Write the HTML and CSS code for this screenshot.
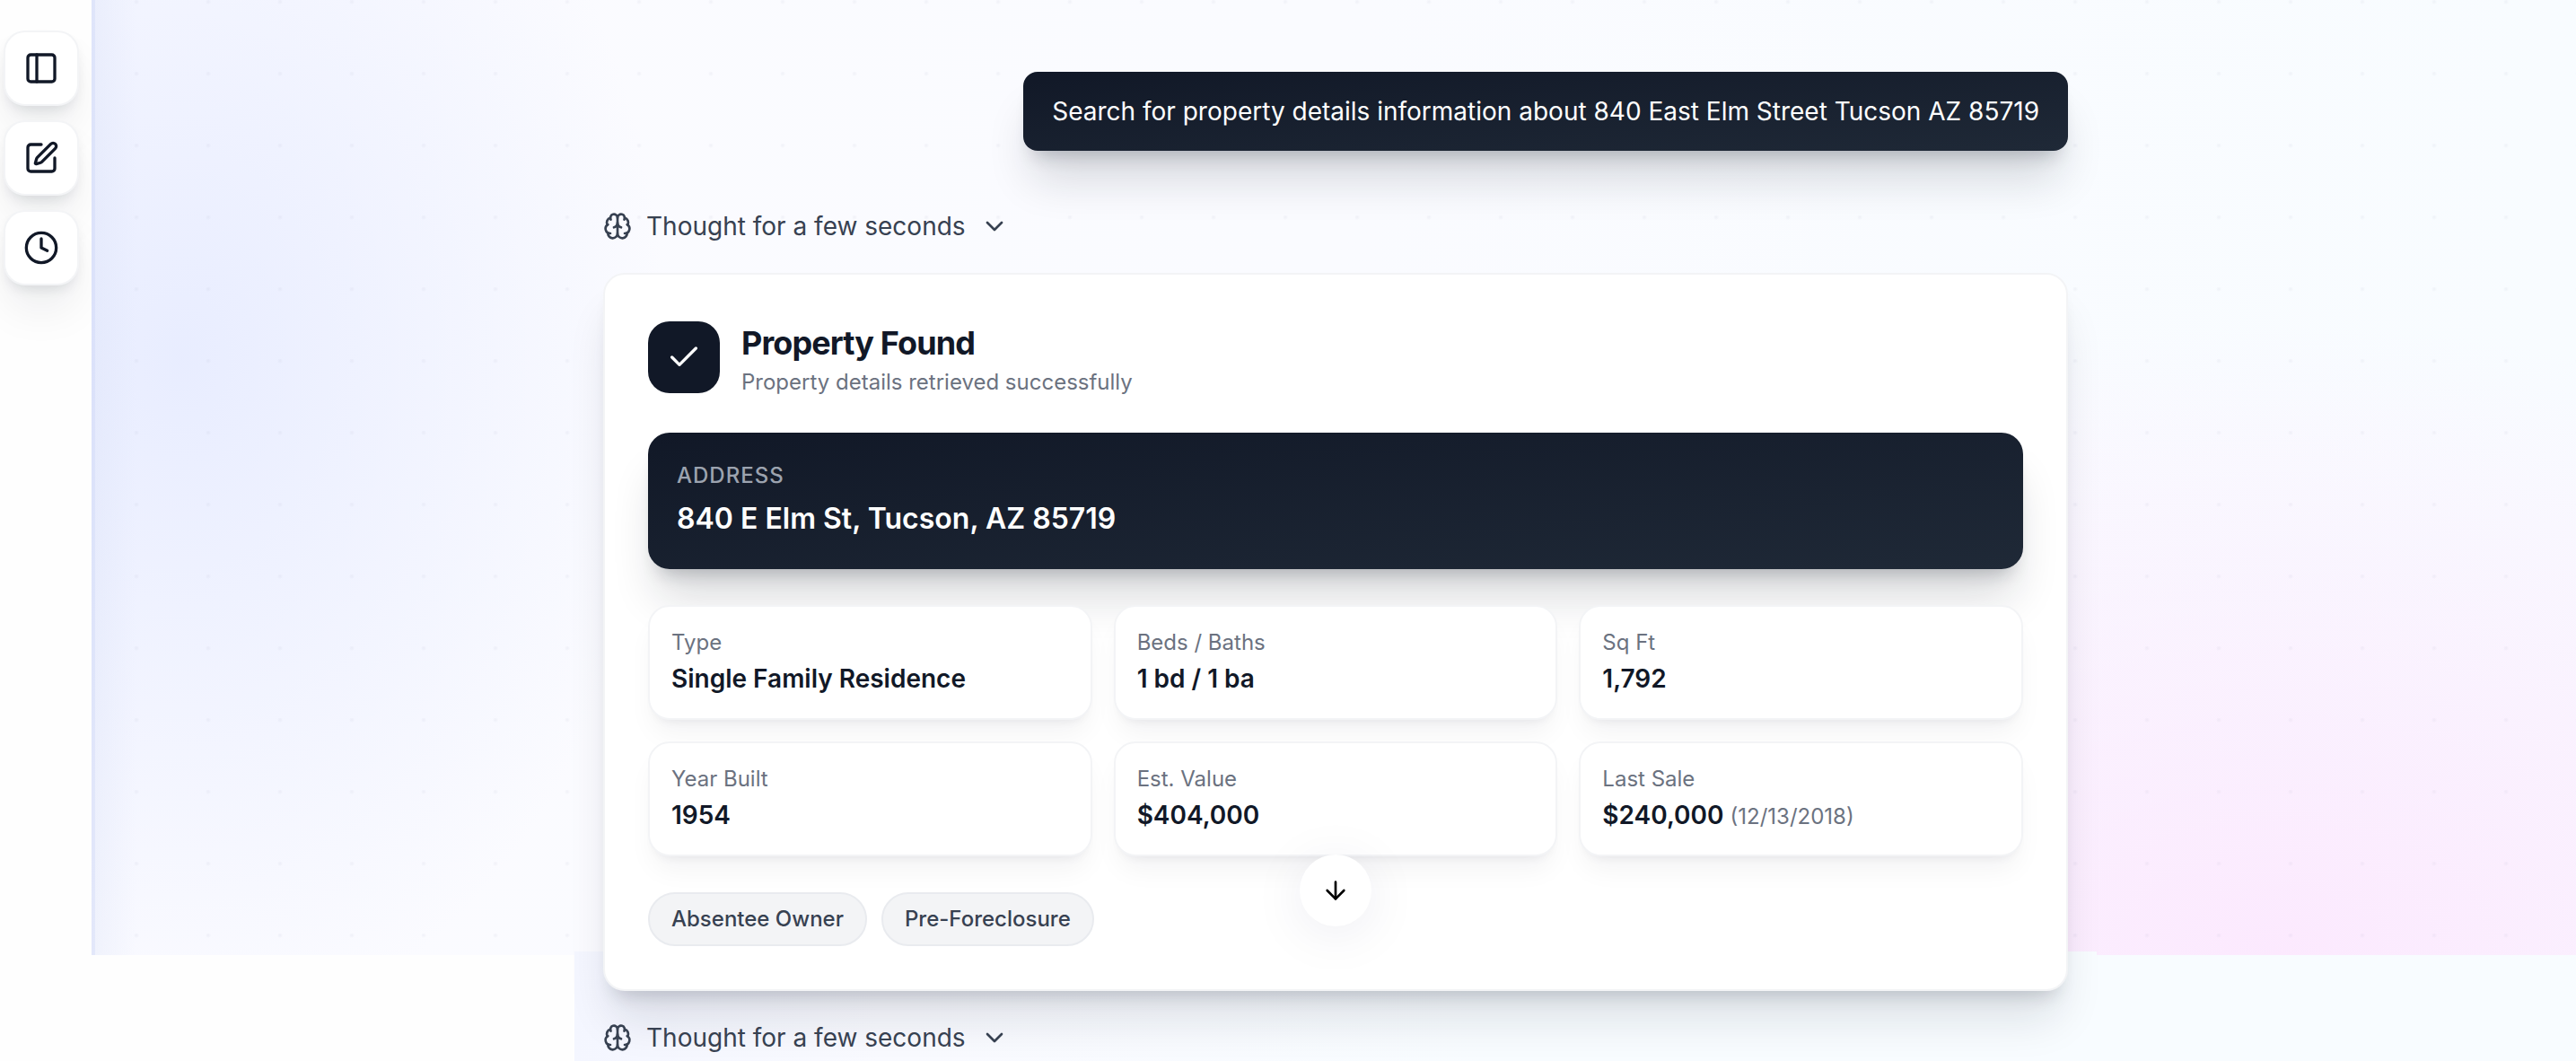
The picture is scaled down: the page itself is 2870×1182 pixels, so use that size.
FILE: index.html
```html
<!DOCTYPE html>
<html lang="en">
<head>
    <meta charset="UTF-8">
    <meta name="viewport" content="width=device-width, initial-scale=1.0">
    <title>Property Assistant</title>
    <link rel="stylesheet" href="styles.css">
</head>
<body>
    <svg class="sprite" aria-hidden="true">
        <symbol id="icon-brain" viewBox="0 0 24 24">
            <path d="M12 18V5"/>
            <path d="M15 13a4.17 4.17 0 0 1-3-4 4.17 4.17 0 0 1-3 4"/>
            <path d="M17.598 6.5A3 3 0 1 0 12 5a3 3 0 1 0-5.598 1.5"/>
            <path d="M17.997 5.125a4 4 0 0 1 2.526 5.77"/>
            <path d="M18 18a4 4 0 0 0 2-7.464"/>
            <path d="M19.967 17.483A4 4 0 1 1 12 18a4 4 0 1 1-7.967-.517"/>
            <path d="M6 18a4 4 0 0 1-2-7.464"/>
            <path d="M6.003 5.125a4 4 0 0 0-2.526 5.77"/>
        </symbol>
        <symbol id="icon-chevron" viewBox="0 0 24 24">
            <path d="m6 9 6 6 6-6"/>
        </symbol>
    </svg>

    <div class="app">
        <nav class="sidebar">
            <button class="nav-button" type="button" aria-label="Toggle sidebar">
                <svg class="icon" viewBox="0 0 24 24">
                    <rect x="3" y="3" width="18" height="18" rx="2"/>
                    <path d="M9 3v18"/>
                </svg>
            </button>
            <button class="nav-button" type="button" aria-label="New chat">
                <svg class="icon" viewBox="0 0 24 24">
                    <path d="M12 3H5a2 2 0 0 0-2 2v14a2 2 0 0 0 2 2h14a2 2 0 0 0 2-2v-7"/>
                    <path d="M18.375 2.625a1 1 0 0 1 3 3l-9.013 9.014a2 2 0 0 1-.853.505l-2.873.84a.5.5 0 0 1-.62-.62l.84-2.873a2 2 0 0 1 .506-.852z"/>
                </svg>
            </button>
            <button class="nav-button" type="button" aria-label="History">
                <svg class="icon" viewBox="0 0 24 24">
                    <circle cx="12" cy="12" r="10"/>
                    <path d="M12 6v6l4 2"/>
                </svg>
            </button>
        </nav>

        <main class="chat">
            <div class="backdrop"></div>
            <div class="thread">
                <div class="user-message">Search for property details information about 840 East Elm Street Tucson AZ 85719</div>

                <button class="thought" type="button">
                    <svg class="icon thought-icon"><use href="#icon-brain"/></svg>
                    <span>Thought for a few seconds</span>
                    <svg class="icon thought-chevron"><use href="#icon-chevron"/></svg>
                </button>

                <section class="card">
                    <header class="card-header">
                        <div class="card-badge">
                            <svg class="icon" viewBox="0 0 24 24"><path d="M20 6 9 17l-5-5"/></svg>
                        </div>
                        <div>
                            <h2 class="card-title">Property Found</h2>
                            <p class="card-subtitle">Property details retrieved successfully</p>
                        </div>
                    </header>

                    <div class="address">
                        <div class="address-label">Address</div>
                        <div class="address-value">840 E Elm St, Tucson, AZ 85719</div>
                    </div>

                    <dl class="facts">
                        <div class="fact">
                            <dt>Type</dt>
                            <dd>Single Family Residence</dd>
                        </div>
                        <div class="fact">
                            <dt>Beds / Baths</dt>
                            <dd>1 bd / 1 ba</dd>
                        </div>
                        <div class="fact">
                            <dt>Sq Ft</dt>
                            <dd>1,792</dd>
                        </div>
                        <div class="fact">
                            <dt>Year Built</dt>
                            <dd>1954</dd>
                        </div>
                        <div class="fact">
                            <dt>Est. Value</dt>
                            <dd>$404,000</dd>
                        </div>
                        <div class="fact">
                            <dt>Last Sale</dt>
                            <dd>$240,000 <span class="fact-note">(12/13/2018)</span></dd>
                        </div>
                    </dl>

                    <div class="tags">
                        <span class="tag">Absentee Owner</span>
                        <span class="tag">Pre-Foreclosure</span>
                    </div>
                </section>

                <button class="thought" type="button">
                    <svg class="icon thought-icon"><use href="#icon-brain"/></svg>
                    <span>Thought for a few seconds</span>
                    <svg class="icon thought-chevron"><use href="#icon-chevron"/></svg>
                </button>
            </div>

            <button class="scroll-button" type="button" aria-label="Scroll to bottom">
                <svg class="icon" viewBox="0 0 24 24"><path d="M12 5v14"/><path d="m19 12-7 7-7-7"/></svg>
            </button>
        </main>
    </div>
</body>
</html>
```
FILE: styles.css
```css
* {
    box-sizing: border-box;
}

body {
    margin: 0;
    font-family: Inter, "Liberation Sans", sans-serif;
    font-size: 28px;
    line-height: 40px;
    color: #111827;
    background: #fefefe;
}

button {
    font: inherit;
    cursor: pointer;
}

h2, p, dl, dd {
    margin: 0;
}

.sprite {
    display: none;
}

.icon {
    fill: none;
    stroke: currentColor;
    stroke-width: 2;
    stroke-linecap: round;
    stroke-linejoin: round;
    flex-shrink: 0;
}

.app {
    display: flex;
    height: 100vh;
    overflow: hidden;
}

/* Sidebar */
.sidebar {
    width: 102px;
    flex-shrink: 0;
    display: flex;
    flex-direction: column;
    gap: 16px;
    padding: 34px 14px 34px 4px;
}

.nav-button {
    width: 84px;
    height: 84px;
    display: flex;
    align-items: center;
    justify-content: center;
    padding: 0;
    color: #111827;
    background: #ffffff;
    border: 2px solid #f3f4f6;
    border-radius: 24px;
    box-shadow: 0 30px 50px -6px rgba(17, 24, 39, 0.08), 0 8px 16px -6px rgba(17, 24, 39, 0.14);
}

.nav-button .icon {
    width: 40px;
    height: 40px;
}

/* Chat area */
.chat {
    position: relative;
    flex-grow: 1;
    display: flex;
    justify-content: center;
    padding-left: 4px;
    background: linear-gradient(to right, #fefefe 50%, #f8fcff 50%);
}

.backdrop {
    position: absolute;
    top: 0;
    left: 0;
    right: 0;
    bottom: 118px;
    border-left: 4px solid rgba(199, 210, 246, 0.3);
    background:
        radial-gradient(circle at 50px 2px, rgba(99, 102, 141, 0.05) 1px, transparent 3px) 0 0 / 80px 80px,
        linear-gradient(to right, rgba(199, 210, 240, 0.2), transparent 50px),
        radial-gradient(ellipse 540px 760px at 100px 400px, rgba(226, 232, 255, 0.75), transparent),
        radial-gradient(ellipse 1100px 700px at 88% 100%, rgba(252, 232, 254, 0.95), transparent),
        linear-gradient(to right, #fbfbff, #fafbff 50%, #f8fcff);
    background-origin: border-box;
}

.thread {
    position: relative;
    width: 100%;
    max-width: 1696px;
    min-height: 100%;
    display: flex;
    flex-direction: column;
    align-items: flex-start;
    padding: 80px 32px 0;
    background: linear-gradient(to right, #f4f6ff, #f9faff 20%, #f8fcff 60%) bottom / 100% 122px no-repeat;
}

.user-message {
    align-self: flex-end;
    padding: 24px 32px;
    color: #ffffff;
    background: linear-gradient(to bottom right, #111827, #1f2937);
    border-radius: 16px;
    box-shadow: 0 40px 50px -10px rgba(17, 24, 39, 0.16), 0 16px 20px -12px rgba(17, 24, 39, 0.24);
}

.thought {
    display: flex;
    align-items: center;
    gap: 16px;
    height: 40px;
    margin: 64px 0 32px;
    padding: 0;
    color: #374151;
    background: none;
    border: none;
}

.thought-icon {
    width: 32px;
    height: 32px;
}

.thought-chevron {
    width: 32px;
    height: 32px;
}

/* Property card */
.card {
    width: 100%;
    padding: 48px;
    background: #ffffff;
    border: 2px solid #f3f4f6;
    border-radius: 24px;
    box-shadow: 0 40px 50px -10px rgba(17, 24, 39, 0.12), 0 16px 20px -12px rgba(17, 24, 39, 0.18);
}

.card + .thought {
    margin: 32px 0 0;
}

.card-header {
    display: flex;
    align-items: center;
    gap: 24px;
    margin-bottom: 40px;
}

.card-badge {
    width: 80px;
    height: 80px;
    display: flex;
    align-items: center;
    justify-content: center;
    color: #ffffff;
    background: #111827;
    border-radius: 24px;
}

.card-badge .icon {
    width: 40px;
    height: 40px;
}

.card-title {
    font-size: 36px;
    line-height: 56px;
    font-weight: 700;
    letter-spacing: -0.025em;
}

.card-subtitle {
    font-size: 24px;
    line-height: 32px;
    color: #6b7280;
}

.address {
    margin-bottom: 40px;
    padding: 32px;
    color: #ffffff;
    background: linear-gradient(to bottom right, #111827, #1f2937);
    border-radius: 24px;
    box-shadow: 0 40px 50px -10px rgba(17, 24, 39, 0.16), 0 16px 20px -12px rgba(17, 24, 39, 0.24);
}

.address-label {
    margin-bottom: 8px;
    font-size: 24px;
    line-height: 32px;
    font-weight: 500;
    letter-spacing: 1px;
    text-transform: uppercase;
    color: #9ca3af;
}

.address-value {
    font-size: 32px;
    line-height: 48px;
    font-weight: 600;
}

.facts {
    display: grid;
    grid-template-columns: repeat(3, 1fr);
    gap: 24px;
    margin-bottom: 40px;
}

.fact {
    padding: 24px;
    background: #ffffff;
    border: 2px solid #f3f4f6;
    border-radius: 24px;
    box-shadow: 0 20px 30px -6px rgba(17, 24, 39, 0.05), 0 8px 12px -8px rgba(17, 24, 39, 0.08);
}

.fact dt {
    margin-bottom: 4px;
    font-size: 24px;
    line-height: 32px;
    color: #6b7280;
}

.fact dd {
    font-weight: 600;
}

.fact-note {
    font-size: 24px;
    line-height: 32px;
    font-weight: 400;
    color: #6b7280;
}

.tags {
    display: flex;
    gap: 16px;
}

.tag {
    padding: 12px 24px;
    font-size: 24px;
    line-height: 32px;
    font-weight: 500;
    color: #374151;
    background: #f3f4f6;
    border: 2px solid #e9ebef;
    border-radius: 30px;
}

/* Floats over the thread */
.scroll-button {
    position: absolute;
    bottom: 150px;
    left: calc(50% + 2px);
    width: 80px;
    height: 80px;
    display: flex;
    align-items: center;
    justify-content: center;
    padding: 0;
    color: #000000;
    background: #ffffff;
    border: none;
    border-radius: 50%;
    transform: translateX(-50%);
    box-shadow: 0 8px 60px rgba(30, 30, 90, 0.08);
}

.scroll-button .icon {
    width: 32px;
    height: 32px;
}
```
